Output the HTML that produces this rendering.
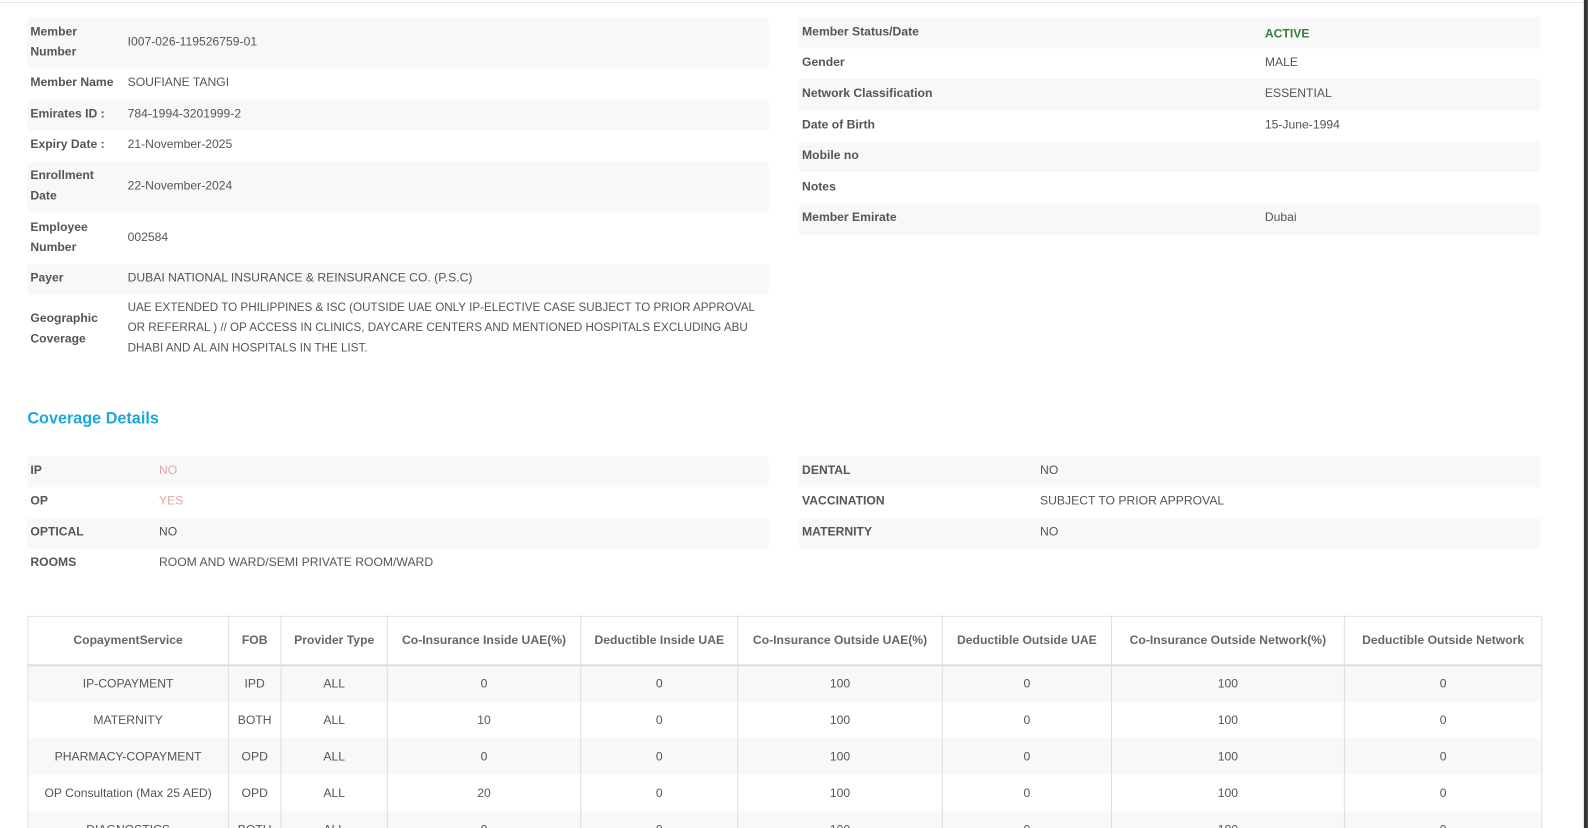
<!DOCTYPE html>
<html style="width:1588px;height:828px;overflow:hidden"><head><style>
*{margin:0;padding:0;box-sizing:border-box}
body{width:1588px;height:828px;overflow:hidden;background:#fff;font-family:"Liberation Sans",sans-serif;font-size:12px;color:#555;position:relative}
#w{position:absolute;left:0;top:0;width:1568px;height:818px;transform:scale(1.0127);transform-origin:0 0;overflow:hidden}
.r{position:absolute;display:flex;align-items:center}
.g{background:#f8f8f8}
.l{position:absolute;font-weight:bold;color:#555;line-height:20px}
.v{position:absolute;color:#555;line-height:20px}
.tw{position:absolute;left:27px;top:608px;width:1496px;height:210px;overflow:hidden}
table{width:1495px;border-collapse:collapse;table-layout:fixed}
th{height:48px;font-weight:bold;color:#666;border:1px solid #ddd;border-bottom:2px solid #ddd;text-align:center;font-size:12px}
td{height:36px;text-align:center;color:#555;border-left:1px solid #ddd;border-right:1px solid #ddd}
tr:nth-child(odd) td{background:#f8f8f8}
</style></head><body><div id="w">
<div style="position:absolute;left:0;top:2px;width:1566px;height:1px;background:#e4e4e4"></div>
<div style="position:absolute;left:1564px;top:0;width:4px;height:828px;background:#333"></div>

<div class="r g" style="left:27px;top:17px;width:732px;height:51px"></div>
<div class="r g" style="left:27px;top:98px;width:732px;height:31px"></div>
<div class="r g" style="left:27px;top:160px;width:732px;height:50px"></div>
<div class="r g" style="left:27px;top:261px;width:732px;height:30px"></div>
<div class="l" style="left:30px;top:21px;width:90px">Member<br>Number</div><div class="v" style="left:126px;top:31px">I007-026-119526759-01</div>
<div class="l" style="left:30px;top:71px">Member Name</div><div class="v" style="left:126px;top:71px">SOUFIANE TANGI</div>
<div class="l" style="left:30px;top:102px">Emirates ID :</div><div class="v" style="left:126px;top:102px">784-1994-3201999-2</div>
<div class="l" style="left:30px;top:132px">Expiry Date :</div><div class="v" style="left:126px;top:132px">21-November-2025</div>
<div class="l" style="left:30px;top:163px">Enrollment<br>Date</div><div class="v" style="left:126px;top:173px">22-November-2024</div>
<div class="l" style="left:30px;top:214px">Employee<br>Number</div><div class="v" style="left:126px;top:224px">002584</div>
<div class="l" style="left:30px;top:264px">Payer</div><div class="v" style="left:126px;top:264px">DUBAI NATIONAL INSURANCE &amp; REINSURANCE CO. (P.S.C)</div>
<div class="l" style="left:30px;top:304px">Geographic<br>Coverage</div><div class="v" style="left:126px;top:294px;width:628px;font-size:11.5px">UAE EXTENDED TO PHILIPPINES &amp; ISC (OUTSIDE UAE ONLY IP-ELECTIVE CASE SUBJECT TO PRIOR APPROVAL OR REFERRAL ) // OP ACCESS IN CLINICS, DAYCARE CENTERS AND MENTIONED HOSPITALS EXCLUDING ABU DHABI AND AL AIN HOSPITALS IN THE LIST.</div>

<div class="r g" style="left:789px;top:17px;width:732px;height:31px"></div>
<div class="r g" style="left:789px;top:78px;width:732px;height:31px"></div>
<div class="r g" style="left:789px;top:140px;width:732px;height:30px"></div>
<div class="r g" style="left:789px;top:201px;width:732px;height:31px"></div>
<div class="l" style="left:792px;top:21px">Member Status/Date</div><div class="v" style="left:1249px;top:23px;color:#3a7d3a;font-weight:bold">ACTIVE</div>
<div class="l" style="left:792px;top:51px">Gender</div><div class="v" style="left:1249px;top:51px">MALE</div>
<div class="l" style="left:792px;top:82px">Network Classification</div><div class="v" style="left:1249px;top:82px">ESSENTIAL</div>
<div class="l" style="left:792px;top:113px">Date of Birth</div><div class="v" style="left:1249px;top:113px">15-June-1994</div>
<div class="l" style="left:792px;top:143px">Mobile no</div>
<div class="l" style="left:792px;top:174px">Notes</div>
<div class="l" style="left:792px;top:204px">Member Emirate</div><div class="v" style="left:1249px;top:204px">Dubai</div>

<div style="position:absolute;left:27px;top:405px;font-size:16px;font-weight:bold;color:#1ea7dc">Coverage Details</div>

<div class="r g" style="left:27px;top:451px;width:732px;height:30px"></div>
<div class="r g" style="left:27px;top:512px;width:732px;height:30px"></div>
<div class="l" style="left:30px;top:454px">IP</div><div class="v" style="left:157px;top:454px;color:#e0a8a8">NO</div>
<div class="l" style="left:30px;top:484px">OP</div><div class="v" style="left:157px;top:484px;color:#e0a8a8">YES</div>
<div class="l" style="left:30px;top:515px">OPTICAL</div><div class="v" style="left:157px;top:515px">NO</div>
<div class="l" style="left:30px;top:545px">ROOMS</div><div class="v" style="left:157px;top:545px">ROOM AND WARD/SEMI PRIVATE ROOM/WARD</div>

<div class="r g" style="left:789px;top:451px;width:732px;height:30px"></div>
<div class="r g" style="left:789px;top:512px;width:732px;height:30px"></div>
<div class="l" style="left:792px;top:454px">DENTAL</div><div class="v" style="left:1027px;top:454px">NO</div>
<div class="l" style="left:792px;top:484px">VACCINATION</div><div class="v" style="left:1027px;top:484px">SUBJECT TO PRIOR APPROVAL</div>
<div class="l" style="left:792px;top:515px">MATERNITY</div><div class="v" style="left:1027px;top:515px">NO</div>

<div class="tw"><table>
<colgroup><col style="width:198px"><col style="width:52px"><col style="width:105px"><col style="width:191px"><col style="width:155px"><col style="width:202px"><col style="width:167px"><col style="width:230px"><col style="width:195px"></colgroup>
<thead><tr><th>CopaymentService</th><th>FOB</th><th>Provider Type</th><th>Co-Insurance Inside UAE(%)</th><th>Deductible Inside UAE</th><th>Co-Insurance Outside UAE(%)</th><th>Deductible Outside UAE</th><th>Co-Insurance Outside Network(%)</th><th>Deductible Outside Network</th></tr></thead>
<tbody>
<tr><td>IP-COPAYMENT</td><td>IPD</td><td>ALL</td><td>0</td><td>0</td><td>100</td><td>0</td><td>100</td><td>0</td></tr>
<tr><td>MATERNITY</td><td>BOTH</td><td>ALL</td><td>10</td><td>0</td><td>100</td><td>0</td><td>100</td><td>0</td></tr>
<tr><td>PHARMACY-COPAYMENT</td><td>OPD</td><td>ALL</td><td>0</td><td>0</td><td>100</td><td>0</td><td>100</td><td>0</td></tr>
<tr><td>OP Consultation (Max 25 AED)</td><td>OPD</td><td>ALL</td><td>20</td><td>0</td><td>100</td><td>0</td><td>100</td><td>0</td></tr>
<tr><td>DIAGNOSTICS</td><td>BOTH</td><td>ALL</td><td>0</td><td>0</td><td>100</td><td>0</td><td>100</td><td>0</td></tr>
</tbody></table></div>
</div></body></html>
